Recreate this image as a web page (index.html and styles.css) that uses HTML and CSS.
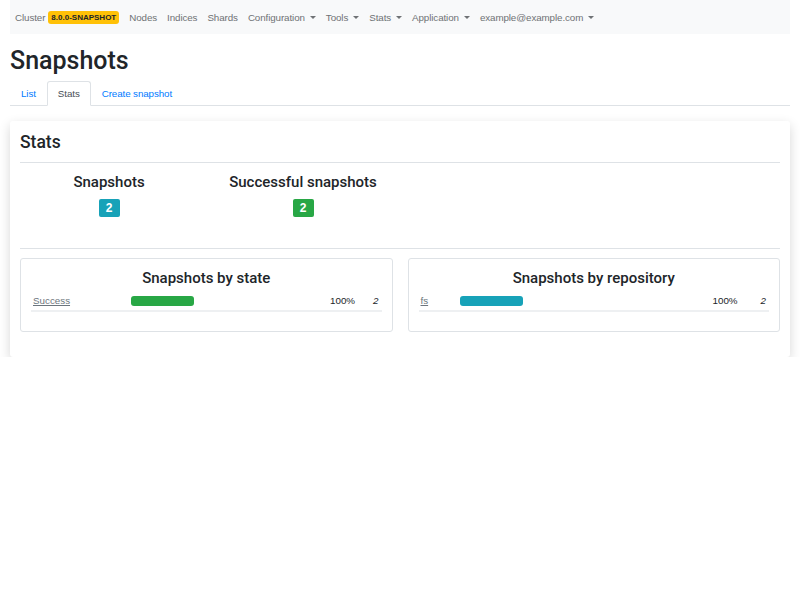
FILE: index.html
```html
<!DOCTYPE html>
<html>
<head>
<meta charset="utf-8">
<link rel="stylesheet" href="styles.css">
</head>
<body>
<nav class="navbar">
  <span class="nav-item">Cluster <span class="badge-warning">8.0.0-SNAPSHOT</span></span>
  <span class="nav-item">Nodes</span>
  <span class="nav-item">Indices</span>
  <span class="nav-item">Shards</span>
  <span class="nav-item dropdown">Configuration</span>
  <span class="nav-item dropdown">Tools</span>
  <span class="nav-item dropdown">Stats</span>
  <span class="nav-item dropdown">Application</span>
  <span class="nav-item dropdown">example@example.com</span>
</nav>
<h1 class="title">Snapshots</h1>
<ul class="tabs">
  <li class="tab">List</li>
  <li class="tab active">Stats</li>
  <li class="tab">Create snapshot</li>
</ul>
<div class="card">
  <h2 class="card-title">Stats</h2>
  <hr class="sep">
  <div class="counters">
    <div class="counter">
      <div class="counter-label">Snapshots</div>
      <span class="count-badge info">2</span>
    </div>
    <div class="counter">
      <div class="counter-label">Successful snapshots</div>
      <span class="count-badge success">2</span>
    </div>
  </div>
  <hr class="sep">
  <div class="panels">
    <div class="panel">
      <h3 class="panel-title">Snapshots by state</h3>
      <div class="row row-state">
        <a class="row-label">Success</a>
        <span class="bar-cell"><span class="bar green" style="width:63px"></span></span>
        <span class="pct">100%</span>
        <em class="num">2</em>
      </div>
    </div>
    <div class="panel">
      <h3 class="panel-title">Snapshots by repository</h3>
      <div class="row row-repo">
        <a class="row-label">fs</a>
        <span class="bar-cell"><span class="bar teal" style="width:63px"></span></span>
        <span class="pct">100%</span>
        <em class="num">2</em>
      </div>
    </div>
  </div>
</div>
</body>
</html>
```

FILE: styles.css
```css
* { box-sizing: border-box; }
body {
  margin: 0;
  padding: 0 10px;
  font-family: "Liberation Sans", Arial, sans-serif;
  color: #212529;
  background: #fff;
}
.navbar {
  display: flex;
  align-items: center;
  height: 34px;
  background: #f8f9fa;
  padding: 0;
  font-size: 9.8px;
  letter-spacing: -0.1px;
  color: #6f7275;
}
.nav-item {
  padding: 0 5px;
  display: flex;
  align-items: center;
  white-space: nowrap;
}
.dropdown::after {
  content: "";
  display: inline-block;
  margin-left: 5px;
  border-top: 3.5px solid #6f7275;
  border-left: 3px solid transparent;
  border-right: 3px solid transparent;
}
.badge-warning {
  display: inline-block;
  margin-left: 3px;
  background: #ffc107;
  color: #212529;
  font-size: 8px;
  font-weight: 700;
  letter-spacing: 0;
  padding: 2px 3px;
  border-radius: 3px;
  line-height: 9px;
}
.title {
  margin: 12px 0 5px;
  font-family: Roboto, "Liberation Sans", sans-serif;
  font-size: 25px;
  font-weight: 500;
  line-height: 30px;
}
.tabs {
  list-style: none;
  margin: 0;
  padding: 0;
  display: flex;
  border-bottom: 1px solid #dee2e6;
  font-size: 9.8px;
  letter-spacing: -0.1px;
}
.tab {
  padding: 6px 10px 5px;
  line-height: 12px;
  color: #007bff;
  border: 1px solid transparent;
  border-radius: 3px 3px 0 0;
  margin-bottom: -1px;
}
.tab.active {
  color: #495057;
  border-color: #dee2e6 #dee2e6 #fff;
  background: #fff;
}
.card {
  margin-top: 15px;
  background: #fff;
  box-shadow: 0 4px 12px rgba(0,0,0,0.16);
  border-radius: 3px;
  padding: 10px 10px 25px;
}
.card-title {
  margin: 0;
  font-family: Roboto, "Liberation Sans", sans-serif;
  font-size: 17.5px;
  font-weight: 500;
  line-height: 22px;
  padding-bottom: 9px;
}
.sep {
  margin: 0;
  border: 0;
  border-top: 1px solid #dee2e6;
}
.counters {
  display: flex;
  margin-left: -8px;
  padding: 10px 0 31px;
}
.counter {
  width: 194px;
  text-align: center;
}
.counter-label {
  font-family: Roboto, "Liberation Sans", sans-serif;
  font-size: 15px;
  font-weight: 500;
  line-height: 18px;
  margin-bottom: 7px;
}
.count-badge {
  display: inline-block;
  width: 21px;
  height: 18px;
  line-height: 18px;
  border-radius: 2px;
  color: #fff;
  font-weight: 700;
  font-size: 12px;
}
.count-badge.info { background: #17a2b8; }
.count-badge.success { background: #28a745; }
.panels {
  display: flex;
  gap: 15px;
  margin-top: 9px;
}
.panel {
  flex: 1;
  border: 1px solid #dee2e6;
  border-radius: 3px;
  padding: 10px 10px 19px;
}
.panel-title {
  margin: 0;
  text-align: center;
  font-family: Roboto, "Liberation Sans", sans-serif;
  font-size: 15px;
  font-weight: 500;
  line-height: 18px;
  padding-bottom: 4px;
}
.row {
  display: grid;
  align-items: center;
  border-bottom: 2px solid #eef0f2;
  font-size: 9.8px;
  height: 21px;
}
.row > * { padding-left: 2px; }
.row-state { grid-template-columns: 98px 199px 42px 1fr; }
.row-repo { grid-template-columns: 39px 253px 48px 1fr; }
.row-label {
  color: #6c757d;
  text-decoration: underline;
}
.bar-cell { display: flex; }
.bar {
  display: inline-block;
  height: 10px;
  border-radius: 3px;
}
.bar.green { background: #28a745; }
.bar.teal { background: #17a2b8; }
.pct { color: #212529; }
.num { text-align: right; padding-right: 3px; }
```
